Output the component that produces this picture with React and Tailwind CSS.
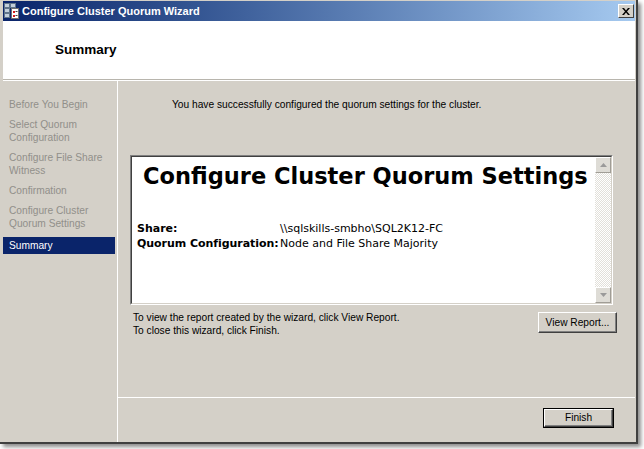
import React from "react";

const navItems = [
  ["Before You Begin"],
  ["Select Quorum", "Configuration"],
  ["Configure File Share", "Witness"],
  ["Confirmation"],
  ["Configure Cluster", "Quorum Settings"],
];

function TitleIcon() {
  return (
    <svg width="16" height="16" viewBox="0 0 16 16">
      <rect x="0.5" y="0.5" width="5" height="4" fill="#c3cfdc" stroke="#5f738a" />
      <rect x="0.5" y="5.5" width="5" height="4" fill="#c3cfdc" stroke="#5f738a" />
      <rect x="0.5" y="10.5" width="5" height="4" fill="#c3cfdc" stroke="#5f738a" />
      <rect x="6.5" y="0.5" width="5" height="4" fill="#c3cfdc" stroke="#5f738a" />
      <rect x="7.5" y="5.5" width="7" height="10" fill="#ffffff" stroke="#707070" />
      <rect x="9" y="8" width="2" height="2" fill="#d41c1c" />
      <rect x="9" y="12" width="2" height="2" fill="#d41c1c" />
      <rect x="11.5" y="8" width="2" height="1" fill="#404040" />
      <rect x="11.5" y="12" width="2" height="1" fill="#404040" />
    </svg>
  );
}

function Tri({ down }) {
  return (
    <svg width="7" height="4" viewBox="0 0 7 4">
      {down ? (
        <path d="M0 0h7L3.5 4z" fill="#9a9a9a" />
      ) : (
        <path d="M0 4h7L3.5 0z" fill="#9a9a9a" />
      )}
    </svg>
  );
}

function ScrollBtn({ down }) {
  return (
    <div className="h-[16px] w-[16px] bg-[#dedcd6] border border-t-white border-l-white border-r-[#a09d96] border-b-[#a09d96] flex items-center justify-center">
      <Tri down={down} />
    </div>
  );
}

export default function App() {
  return (
    <div className="w-[644px] h-[449px] bg-white overflow-hidden font-['Liberation_Sans',Arial,sans-serif]">
      <div className="w-[638px] h-[444px] flex flex-col bg-[#d4d0c8] pl-[3px] pr-[1px] pt-[1px] border-r-2 border-b-2 border-r-[#404040] border-b-[#404040] shadow-[3px_3px_4px_rgba(0,0,0,0.45)]">
        {/* Title bar */}
        <div className="h-[20px] flex items-center bg-linear-to-r from-[#0a246a] to-[#a6caf0] pl-[1px]">
          <TitleIcon />
          <span className="ml-[2px] text-[11px] leading-[13px] font-bold text-white">
            Configure Cluster Quorum Wizard
          </span>
          <div className="ml-auto mr-[1px] w-[16px] h-[14px] bg-[#d4d0c8] border border-t-white border-l-white border-r-[#404040] border-b-[#404040] flex items-center justify-center">
            <svg width="8" height="7" viewBox="0 0 8 7">
              <path d="M0 0h2l2 2.4L6 0h2L5 3.5 8 7H6L4 4.6 2 7H0l3-3.5z" fill="#000" />
            </svg>
          </div>
        </div>

        {/* Header */}
        <div className="h-[58px] bg-white pl-[52px] pt-[16px]">
          <span className="text-[13.5px] leading-[16px] font-bold text-black">Summary</span>
        </div>
        <div className="h-px bg-[#b8b5ad]" />
        <div className="h-px bg-white" />

        {/* Body */}
        <div className="h-[361px] flex">
          {/* Nav */}
          <div className="w-[114px] pt-[14px] flex flex-col gap-px text-[10.2px] leading-[13px]">
            {navItems.map((lines, i) => (
              <div key={i} className="py-[3px] pl-[6px] text-[#918f8a]">
                {lines.map((l, j) => (
                  <div key={j}>{l}</div>
                ))}
              </div>
            ))}
            <div className="mt-[3px] mr-[2px] py-[2px] pl-[6px] bg-[#0a246a] text-white">Summary</div>
          </div>
          <div className="w-px bg-white" />

          {/* Content */}
          <div className="flex-1 flex flex-col">
            <div className="h-[316px] pt-[17px] flex flex-col">
              <div className="pl-[54px] text-[10.2px] leading-[13px] text-black">
                You have successfully configured the quorum settings for the cluster.
              </div>

              <div className="mt-[44px] ml-[12px] w-[483px] h-[150px] border border-t-[#808080] border-l-[#808080] border-r-white border-b-white">
                <div className="h-full flex border border-t-[#404040] border-l-[#404040] border-r-[#d4d0c8] border-b-[#d4d0c8]">
                  <div className="flex-1 bg-white px-[5px] pt-[5px] font-['DejaVu_Sans',Verdana,sans-serif] text-black">
                    <div className="ml-[6px] text-[22.5px] leading-[28px] font-bold whitespace-nowrap">
                      Configure Cluster Quorum Settings
                    </div>
                    <div className="mt-[31px] grid grid-cols-[143px_1fr] text-[11px] leading-[15px]">
                      <div className="font-bold">Share:</div>
                      <div>\\sqlskills-smbho\SQL2K12-FC</div>
                      <div className="font-bold whitespace-nowrap tracking-[-0.05px]">Quorum Configuration:</div>
                      <div>Node and File Share Majority</div>
                    </div>
                  </div>
                  <div className="w-[16px] flex flex-col">
                    <ScrollBtn />
                    <div className="flex-1 bg-[image:repeating-conic-gradient(#e2e0da_0_25%,#ffffff_0_50%)] bg-[length:2px_2px]" />
                    <ScrollBtn down />
                  </div>
                </div>
              </div>

              <div className="mt-[7px] flex items-start pl-[15px] pr-[18px]">
                <div className="text-[10.2px] leading-[12.5px] text-black">
                  <div>To view the report created by the wizard, click View Report.</div>
                  <div>To close this wizard, click Finish.</div>
                </div>
                <div className="ml-auto w-[79px] h-[21px] bg-[#d4d0c8] border border-t-white border-l-white border-r-[#404040] border-b-[#404040] shadow-[inset_-1px_-1px_0_#808080] flex items-center justify-center text-[10.2px] text-black">
                  View Report...
                </div>
              </div>
            </div>

            <div className="h-px bg-white" />

            <div className="flex-1 flex justify-end items-start pt-[10px] pr-[21px]">
              <div className="w-[71px] h-[20px] border border-black">
                <div className="h-full bg-[#d4d0c8] border border-t-white border-l-white border-r-[#404040] border-b-[#404040] shadow-[inset_-1px_-1px_0_#808080] flex items-center justify-center text-[10.2px] text-black">
                  Finish
                </div>
              </div>
            </div>
          </div>
        </div>
      </div>
    </div>
  );
}
